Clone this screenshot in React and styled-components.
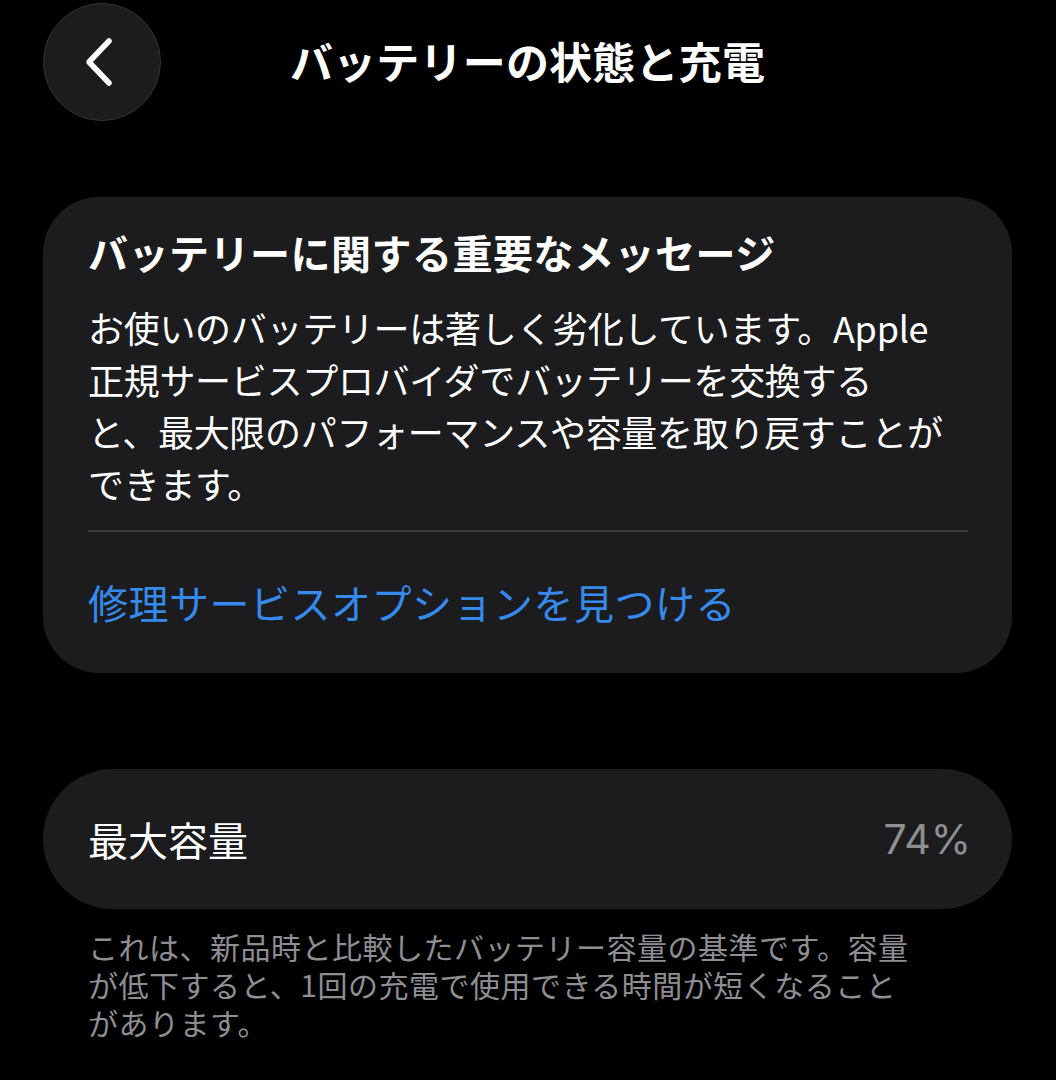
import React from "react";
import styled, { createGlobalStyle } from "styled-components";

const Global = createGlobalStyle`
  html, body {
    margin: 0;
    padding: 0;
    background: #000;
  }
  body {
    font-family: "Noto Sans CJK JP", "Noto Sans", sans-serif;
    color: #fff;
  }
`;

const Page = styled.div`
  width: 1056px;
  min-height: 1080px;
  box-sizing: border-box;
  padding: 3px 44px 0 43px;
  background: #000;
`;

const Header = styled.header`
  display: grid;
  grid-template-columns: 118px 1fr 118px;
  align-items: center;
  height: 118px;
`;

const BackButton = styled.button`
  width: 118px;
  height: 118px;
  border-radius: 50%;
  background: #1c1c1e;
  border: 1.5px solid #333336;
  display: flex;
  align-items: center;
  justify-content: center;
  padding: 0;
  box-sizing: border-box;
  cursor: pointer;
`;

const Title = styled.h1`
  margin: 0 0 4px;
  text-align: center;
  font-size: 43px;
  font-weight: 700;
  letter-spacing: 0.2px;
  line-height: 1;
`;

const Card = styled.section`
  background: #1c1c1e;
  border-radius: ${(p) => p.$radius || 56}px;
  margin-top: ${(p) => p.$top}px;
  padding: ${(p) => p.$pad};
`;

const CardHeading = styled.h2`
  margin: 0;
  font-size: 40px;
  font-weight: 700;
  line-height: 46px;
  letter-spacing: 0.5px;
`;

const Body = styled.p`
  margin: 26px 0 0;
  font-size: 36px;
  line-height: 52px;
  font-weight: 400;
  white-space: nowrap;
  letter-spacing: -0.3px;
`;

const Divider = styled.hr`
  border: none;
  height: 2px;
  background: #38383a;
  margin: 21px 0 0;
`;

const Link = styled.a`
  display: block;
  margin-top: 46px;
  font-size: 40px;
  line-height: 48px;
  color: #358aec;
  text-decoration: none;
  letter-spacing: 0.5px;
`;

const Row = styled.div`
  display: flex;
  align-items: center;
  justify-content: space-between;
  height: 140px;
`;

const RowLabel = styled.span`
  font-size: 40px;
  line-height: 1;
`;

const RowValue = styled.span`
  font-size: 41px;
  line-height: 1;
  color: #8e8e93;
  font-family: "Inter", "Noto Sans", sans-serif;
  font-weight: 400;
  margin-right: -4px;
`;

const Footnote = styled.p`
  margin: 18px 0 0;
  padding-left: 45px;
  font-size: 30px;
  line-height: 38px;
  letter-spacing: 0.5px;
  color: #8e8e93;
  white-space: nowrap;
`;

const Chevron = () => (
  <svg width="40" height="56" viewBox="0 0 40 56" fill="none">
    <path
      d="M27 7 L7 28 L27 49"
      stroke="#fff"
      strokeWidth="5.5"
      strokeLinecap="round"
      strokeLinejoin="round"
    />
  </svg>
);

export default function App() {
  return (
    <>
      <Global />
      <Page>
        <Header>
          <BackButton aria-label="戻る">
            <Chevron />
          </BackButton>
          <Title>バッテリーの状態と充電</Title>
          <span />
        </Header>

        <Card $top={76} $pad="32px 44px 47px 45px">
          <CardHeading>バッテリーに関する重要なメッセージ</CardHeading>
          <Body>
            お使いのバッテリーは著しく劣化しています。Apple
            <br />
            正規サービスプロバイダでバッテリーを交換する
            <br />
            と、最大限のパフォーマンスや容量を取り戻すことが
            <br />
            できます。
          </Body>
          <Divider />
          <Link href="#">修理サービスオプションを見つける</Link>
        </Card>

        <Card $top={96} $radius={70} $pad="0 45px">
          <Row>
            <RowLabel>最大容量</RowLabel>
            <RowValue>74%</RowValue>
          </Row>
        </Card>

        <Footnote>
          これは、新品時と比較したバッテリー容量の基準です。容量
          <br />
          が低下すると、1回の充電で使用できる時間が短くなること
          <br />
          があります。
        </Footnote>
      </Page>
    </>
  );
}
